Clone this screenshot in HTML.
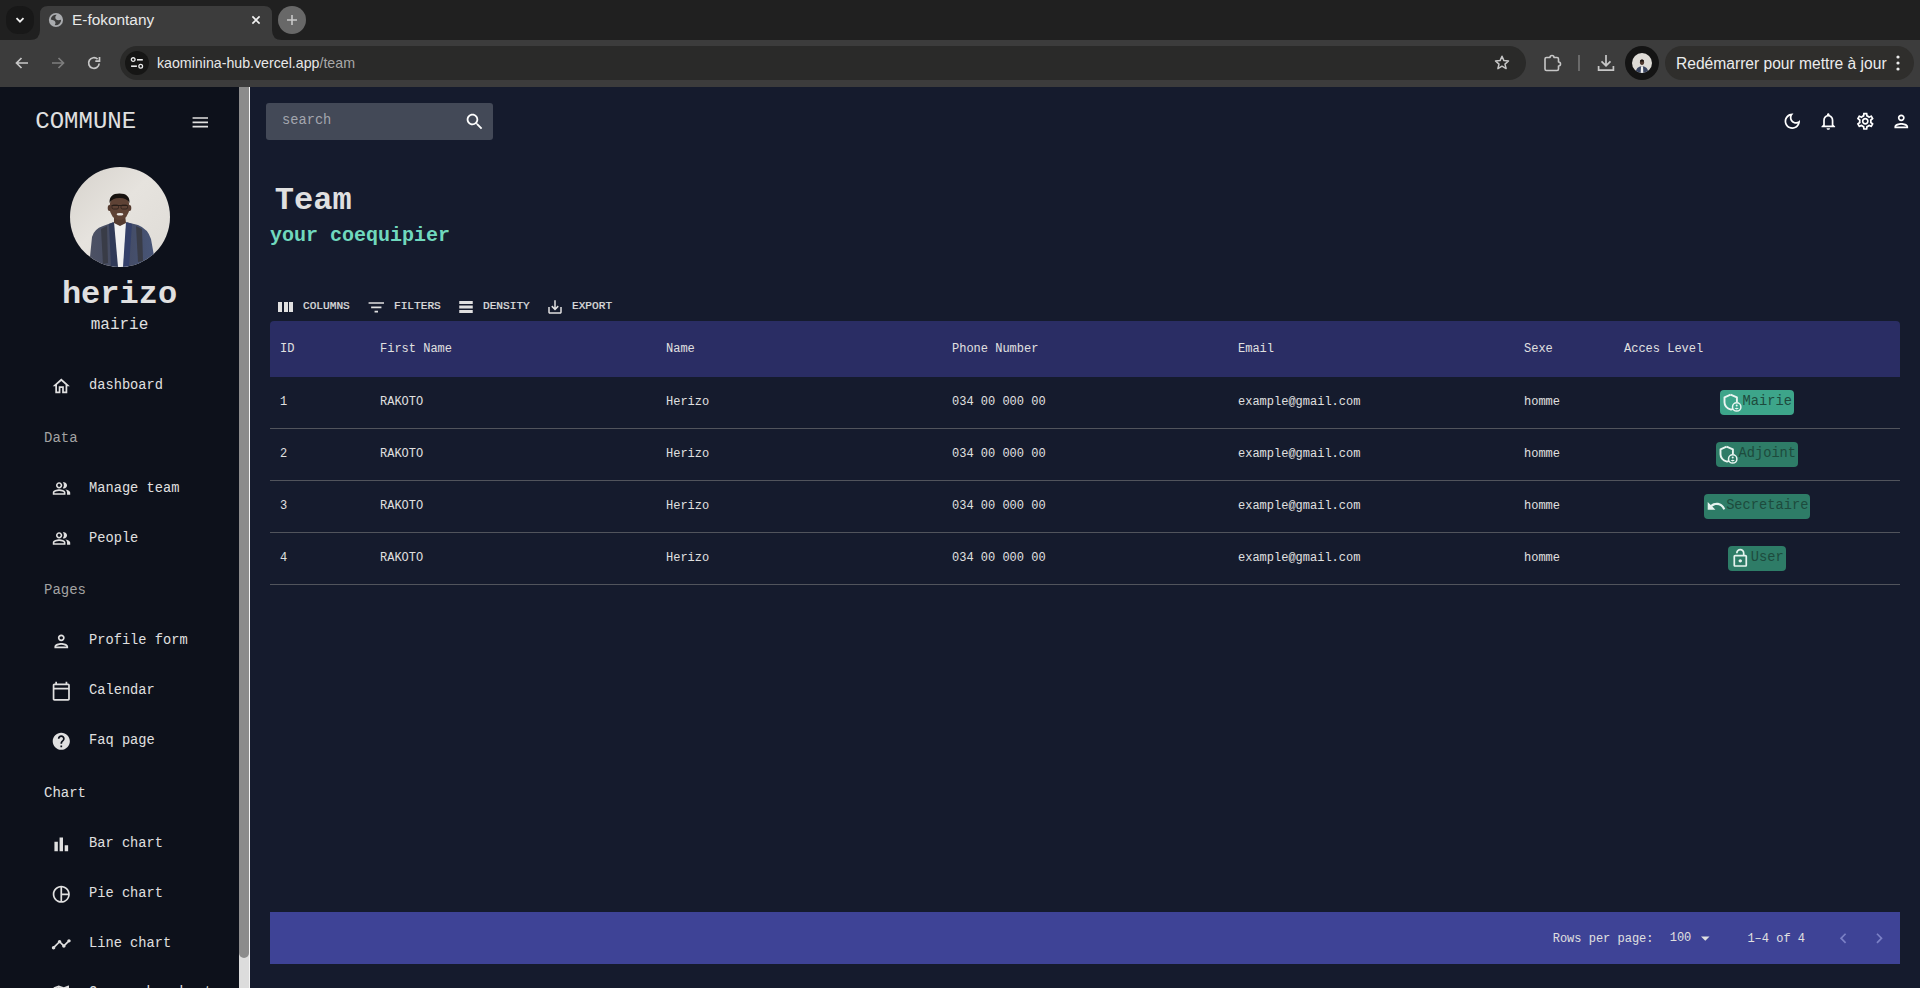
<!DOCTYPE html>
<html><head><meta charset="utf-8">
<style>
*{margin:0;padding:0;box-sizing:border-box}
html,body{width:1920px;height:988px;overflow:hidden;background:#141b2d}
body{position:relative;font-family:"Liberation Mono",monospace;color:#e0e0e0}
.a{position:absolute}
.t{position:absolute;line-height:1;white-space:pre}
.s{font-family:"Liberation Sans",sans-serif}
svg{display:block}
/* chrome */
#tabstrip{left:0;top:0;width:1920px;height:40px;background:#202020}
#toolbar{left:0;top:40px;width:1920px;height:47px;background:#3c3c3c}
#omni{left:120px;top:46px;width:1406px;height:34px;border-radius:17px;background:#2a2a29}
/* page */
#side{left:0;top:87px;width:239px;height:901px;background:#0d111b}
#sbtrack{left:239px;top:87px;width:11px;height:901px;background:#dcdcdc;border-right:1.5px solid #f4f4f4}
#sbthumb{left:239px;top:87px;width:9.7px;height:871px;background:#8b8b8b;border-radius:0 0 5px 5px}
#main{left:250px;top:87px;width:1670px;height:901px;background:#151b2d}
</style></head>
<body>

<div id="tabstrip" class="a"></div>
<div id="toolbar" class="a"></div>
<!-- dropdown btn -->
<div class="a" style="left:6px;top:6px;width:28px;height:28px;border-radius:12px;background:#181818"></div>
<svg class="a" style="left:14px;top:14px" width="12" height="12" viewBox="0 0 12 12"><path d="M2.5 4.2 L6 7.7 L9.5 4.2" fill="none" stroke="#f0f0f0" stroke-width="1.8"/></svg>
<!-- active tab -->
<svg class="a" style="left:30px;top:6px" width="254" height="34" viewBox="0 0 254 34"><path d="M0 34 Q10 34 10 24 L10 8 Q10 0 18 0 L234 0 Q242 0 242 8 L242 24 Q242 34 252 34 Z" fill="#3c3c3c"/></svg>
<svg class="a" style="left:48px;top:12px" width="16" height="16" viewBox="0 0 16 16"><circle cx="7.95" cy="8" r="7.1" fill="#a9abae"/><path d="M2.8 7.4 A5.25 5.25 0 0 1 8.7 2.8 Q7.0 4.2 7.3 6.1 Q7.6 7.7 9.2 8.1 Q11.2 8.4 13.1 7.7 A5.25 5.25 0 0 1 6.7 13.1 Q7.8 11.7 7.4 10.3 Q7.1 8.9 6.0 8.4 Q4.6 7.7 2.8 7.4 Z" fill="#3c3c3c"/></svg>
<div class="t s" style="left:72px;top:12px;font-size:15.4px;color:#e8e8e8">E-fokontany</div>
<svg class="a" style="left:250px;top:14px" width="12" height="12" viewBox="0 0 12 12"><path d="M2.4 2.4 L9.6 9.6 M9.6 2.4 L2.4 9.6" stroke="#f2f2f2" stroke-width="1.6"/></svg>
<div class="a" style="left:278px;top:6px;width:28px;height:28px;border-radius:50%;background:#686868"></div>
<svg class="a" style="left:286px;top:14px" width="12" height="12" viewBox="0 0 12 12"><path d="M6 1 V11 M1 6 H11" stroke="#c9c9c9" stroke-width="1.6"/></svg>
<!-- nav -->
<svg class="a" style="left:13px;top:54px" width="18" height="18" viewBox="0 0 18 18"><path d="M15 9 H3.5 M8.5 4 L3.5 9 L8.5 14" fill="none" stroke="#c7c7c7" stroke-width="1.7"/></svg>
<svg class="a" style="left:49px;top:54px" width="18" height="18" viewBox="0 0 18 18"><path d="M3 9 H14.5 M9.5 4 L14.5 9 L9.5 14" fill="none" stroke="#7d7d7d" stroke-width="1.7"/></svg>
<svg class="a" style="left:85px;top:54px" width="18" height="18" viewBox="0 0 18 18"><path d="M14.2 9.5 A5.3 5.3 0 1 1 12.6 5.2" fill="none" stroke="#c7c7c7" stroke-width="1.7"/><path d="M14.5 3 V7.2 H10.3" fill="none" stroke="#c7c7c7" stroke-width="1.7"/></svg>
<div id="omni" class="a"></div>
<div class="a" style="left:125px;top:51px;width:24px;height:24px;border-radius:50%;background:#161615"></div>
<svg class="a" style="left:129px;top:55px" width="16" height="16" viewBox="0 0 16 16"><circle cx="4.2" cy="4.6" r="1.85" fill="none" stroke="#ececec" stroke-width="1.3"/><path d="M8 4.8 H13.8" stroke="#ececec" stroke-width="1.6"/><circle cx="11.7" cy="11.2" r="1.85" fill="none" stroke="#ececec" stroke-width="1.3"/><path d="M2.1 11.2 H7.9" stroke="#ececec" stroke-width="1.6"/></svg>
<div class="t s" style="left:157px;top:55.5px;font-size:14.2px;color:#e8e8e8">kaominina-hub.vercel.app<span style="color:#a8a8a8">/team</span></div>
<svg class="a" style="left:1494px;top:55px" width="16" height="16" viewBox="0 0 16 16"><path d="M8 1.3 L9.9 5.6 L14.5 6 L11 9.1 L12.1 13.6 L8 11.2 L3.9 13.6 L5 9.1 L1.5 6 L6.1 5.6 Z" fill="none" stroke="#c7c7c7" stroke-width="1.5" stroke-linejoin="round"/></svg>
<svg class="a" style="left:1543px;top:53px" width="20" height="19" viewBox="0 0 20 19"><path d="M3.5 4.5 H7 A2 2 0 0 1 11 4.5 H14 Q15.5 4.5 15.5 6 V9 A2 2 0 0 1 15.5 13 V16 Q15.5 17.5 14 17.5 H3.5 Q2 17.5 2 16 V6 Q2 4.5 3.5 4.5 Z" fill="none" stroke="#c7c7c7" stroke-width="1.6" stroke-linejoin="round"/></svg>
<div class="a" style="left:1578.3px;top:55px;width:1.5px;height:16px;background:#6a6a6a"></div>
<svg class="a" style="left:1596px;top:54px" width="20" height="18" viewBox="0 0 20 18"><path d="M10 1 V11.5 M5.5 7.3 L10 11.7 L14.5 7.3" fill="none" stroke="#c7c7c7" stroke-width="1.7"/><path d="M2.6 12 V16.2 H17.4 V12" fill="none" stroke="#c7c7c7" stroke-width="1.7"/></svg>
<div class="a" style="left:1625px;top:46px;width:34px;height:34px;border-radius:50%;background:#141414"></div>
<svg class="a" style="left:1632px;top:53px" width="20" height="20" viewBox="0 0 20 20"><defs><clipPath id="cav"><circle cx="10" cy="10" r="10"/></clipPath></defs><g clip-path="url(#cav)"><rect width="20" height="20" fill="#dedbd6"/><path d="M3.5 20 Q4 13.5 10 13 Q16 13.5 16.5 20Z" fill="#3a4560"/><path d="M9 13.3 H11 L11.3 20 H8.7Z" fill="#f0f0f0"/><ellipse cx="10" cy="9.3" rx="2.1" ry="2.7" fill="#4f382e"/><path d="M7.9 8.4 Q8 6.4 10 6.4 Q12 6.4 12.1 8.4Z" fill="#1a1412"/></g></svg>
<div class="a" style="left:1665px;top:46px;width:249px;height:34px;border-radius:17px;background:#2f2e2c"></div>
<div class="t s" style="left:1676px;top:55.5px;font-size:15.6px;color:#ececec">Redémarrer pour mettre à jour</div>
<svg class="a" style="left:1892px;top:54px" width="12" height="18" viewBox="0 0 12 18"><circle cx="6" cy="3" r="1.6" fill="#ececec"/><circle cx="6" cy="9" r="1.6" fill="#ececec"/><circle cx="6" cy="15" r="1.6" fill="#ececec"/></svg>
<div id="side" class="a"></div>
<div class="t" style="left:35.3px;top:110px;font-size:24px;color:#e0e0e0">COMMUNE</div>
<svg class="a" style="left:190.1px;top:112.1px" width="20.57" height="20.57" viewBox="0 0 24 24"><path fill="#e0e0e0" d="M3 18h18v-2H3v2zm0-5h18v-2H3v2zm0-7v2h18V6H3z"/></svg>
<svg class="a" style="left:70px;top:167px" width="100" height="100" viewBox="0 0 100 100"><defs><clipPath id="av"><circle cx="50" cy="50" r="50"/></clipPath><linearGradient id="avbg" x1="0" y1="0" x2="1" y2="1"><stop offset="0" stop-color="#d6d2cc"/><stop offset="0.45" stop-color="#e6e3de"/><stop offset="1" stop-color="#dedbd6"/></linearGradient><linearGradient id="jk" x1="0" y1="0" x2="1" y2="0"><stop offset="0" stop-color="#4d5264"/><stop offset="0.5" stop-color="#434a62"/><stop offset="1" stop-color="#485679"/></linearGradient></defs><g clip-path="url(#av)"><rect width="100" height="100" fill="url(#avbg)"/>
<path d="M19 100 L22 70 Q24 62 33 59 L44 55 L56 55 L68 58 Q78 62 81 72 L86 100 Z" fill="url(#jk)"/>
<path d="M31 62 L37 59 L38 96 L33 97 Z" fill="#393c47"/><path d="M66 59 L72 62 L73 94 L68 95 Z" fill="#393c47"/>
<path d="M43 55 L57 55 L58 100 L42 100 Z" fill="#f1f1f1"/>
<path d="M39 57 L44 55 L48 100 L41 100 Z" fill="#303a58"/><path d="M56 55 L62 57 L59 100 L53 100 Z" fill="#34406a"/>
<path d="M44 48 L55 48 L56 56 L50 59 L44 56 Z" fill="#553c31"/>
<ellipse cx="49.5" cy="40" rx="10" ry="13" fill="#5e4235"/>
<ellipse cx="39.5" cy="41" rx="1.8" ry="3" fill="#553b30"/><ellipse cx="59.5" cy="41" rx="1.8" ry="3" fill="#553b30"/>
<path d="M39.5 36 Q39 26.5 49.5 26.5 Q60 26.5 59.5 36 Q57 31 49.5 31 Q42 31 39.5 36Z" fill="#17120f"/>
<path d="M41.5 38.5 H57.5" stroke="#2a1f1a" stroke-width="1.1"/>
<rect x="42" y="38" width="6.5" height="4" rx="1.5" fill="none" stroke="#2a1f1a" stroke-width="0.8"/><rect x="51" y="38" width="6.5" height="4" rx="1.5" fill="none" stroke="#2a1f1a" stroke-width="0.8"/>
<ellipse cx="50" cy="47.3" rx="3.3" ry="1.3" fill="#e9e4e0"/>
</g></svg>
<div class="t" style="left:0;width:239px;text-align:center;top:279.4px;font-size:32px;font-weight:bold;color:#e0e0e0">herizo</div>
<div class="t" style="left:0;width:239px;text-align:center;top:316.8px;font-size:16px;color:#e0e0e0">mairie</div>
<div class="t" style="left:89px;top:378.7px;font-size:13.71px;color:#e0e0e0">dashboard</div>
<svg class="a" style="left:50.7px;top:375.7px" width="20.57" height="20.57" viewBox="0 0 24 24"><path fill="#e0e0e0" d="m12 5.69 5 4.5V18h-2v-6H9v6H7v-7.81zM12 3 2 12h3v8h6v-6h2v6h6v-8h3z"/></svg>
<div class="t" style="left:44px;top:430.9px;font-size:14px;color:#a3a3a3">Data</div>
<div class="t" style="left:89px;top:481.7px;font-size:13.71px;color:#e0e0e0">Manage team</div>
<svg class="a" style="left:51.5px;top:478.9px" width="19" height="19" viewBox="0 0 24 24"><path fill="#e0e0e0" d="M16.67 13.13C18.04 14.06 19 15.32 19 17v3h4v-3c0-2.18-3.57-3.47-6.33-3.87M15 12c2.21 0 4-1.79 4-4s-1.79-4-4-4c-.47 0-.91.1-1.33.24C14.5 5.27 15 6.58 15 8s-.5 2.73-1.33 3.76c.42.14.86.24 1.33.24m-6 0c2.21 0 4-1.79 4-4s-1.79-4-4-4-4 1.79-4 4 1.79 4 4 4m0-6c1.1 0 2 .9 2 2s-.9 2-2 2-2-.9-2-2 .9-2 2-2m0 7c-2.67 0-8 1.34-8 4v3h16v-3c0-2.66-5.33-4-8-4m6 5H3v-.99C3.2 16.29 6.3 15 9 15s5.8 1.29 6 2z"/></svg>
<div class="t" style="left:89px;top:531.7px;font-size:13.71px;color:#e0e0e0">People</div>
<svg class="a" style="left:51.5px;top:528.9px" width="19" height="19" viewBox="0 0 24 24"><path fill="#e0e0e0" d="M16.67 13.13C18.04 14.06 19 15.32 19 17v3h4v-3c0-2.18-3.57-3.47-6.33-3.87M15 12c2.21 0 4-1.79 4-4s-1.79-4-4-4c-.47 0-.91.1-1.33.24C14.5 5.27 15 6.58 15 8s-.5 2.73-1.33 3.76c.42.14.86.24 1.33.24m-6 0c2.21 0 4-1.79 4-4s-1.79-4-4-4-4 1.79-4 4 1.79 4 4 4m0-6c1.1 0 2 .9 2 2s-.9 2-2 2-2-.9-2-2 .9-2 2-2m0 7c-2.67 0-8 1.34-8 4v3h16v-3c0-2.66-5.33-4-8-4m6 5H3v-.99C3.2 16.29 6.3 15 9 15s5.8 1.29 6 2z"/></svg>
<div class="t" style="left:44px;top:582.9px;font-size:14px;color:#a3a3a3">Pages</div>
<div class="t" style="left:89px;top:633.7px;font-size:13.71px;color:#e0e0e0">Profile form</div>
<svg class="a" style="left:50.7px;top:630.7px" width="20.57" height="20.57" viewBox="0 0 24 24"><path fill="#e0e0e0" d="M12 6c1.1 0 2 .9 2 2s-.9 2-2 2-2-.9-2-2 .9-2 2-2m0 10c2.7 0 5.8 1.29 6 2H6c.23-.72 3.31-2 6-2m0-12C9.79 4 8 5.79 8 8s1.79 4 4 4 4-1.79 4-4-1.79-4-4-4m0 10c-2.67 0-8 1.34-8 4v2h16v-2c0-2.66-5.33-4-8-4"/></svg>
<div class="t" style="left:89px;top:683.7px;font-size:13.71px;color:#e0e0e0">Calendar</div>
<svg class="a" style="left:50.7px;top:680.7px" width="20.57" height="20.57" viewBox="0 0 24 24"><path fill="#e0e0e0" d="M20 3h-1V1h-2v2H7V1H5v2H4c-1.1 0-2 .9-2 2v16c0 1.1.9 2 2 2h16c1.1 0 2-.9 2-2V5c0-1.1-.9-2-2-2zm0 18H4V10h16v11zm0-13H4V5h16v3z"/></svg>
<div class="t" style="left:89px;top:733.7px;font-size:13.71px;color:#e0e0e0">Faq page</div>
<svg class="a" style="left:50.7px;top:730.7px" width="20.57" height="20.57" viewBox="0 0 24 24"><path fill="#e0e0e0" d="M12 2C6.48 2 2 6.48 2 12s4.48 10 10 10 10-4.48 10-10S17.52 2 12 2zm1 17h-2v-2h2v2zm2.07-7.75-.9.92C13.45 12.9 13 13.5 13 15h-2v-.5c0-1.1.45-2.1 1.17-2.83l1.24-1.26c.37-.36.59-.86.59-1.41 0-1.1-.9-2-2-2s-2 .9-2 2H8c0-2.21 1.79-4 4-4s4 1.79 4 4c0 .88-.36 1.68-.93 2.25z"/></svg>
<div class="t" style="left:44px;top:785.9px;font-size:14px;color:#e0e0e0">Chart</div>
<div class="t" style="left:89px;top:836.7px;font-size:13.71px;color:#e0e0e0">Bar chart</div>
<svg class="a" style="left:50.7px;top:833.7px" width="20.57" height="20.57" viewBox="0 0 24 24"><path fill="#e0e0e0" d="M4 9h4v11H4zm12 4h4v7h-4zm-6-9h4v16h-4z"/></svg>
<div class="t" style="left:89px;top:886.7px;font-size:13.71px;color:#e0e0e0">Pie chart</div>
<svg class="a" style="left:50.7px;top:883.7px" width="20.57" height="20.57" viewBox="0 0 24 24"><path fill="#e0e0e0" d="M12 2C6.49 2 2 6.49 2 12s4.49 10 10 10 10-4.49 10-10S17.51 2 12 2zm7.93 9H13V4.07c3.61.45 6.48 3.32 6.93 6.93zM4 12c0-4.07 3.06-7.44 7-7.93v15.87c-3.94-.5-7-3.87-7-7.94zm9 7.93V13h6.93c-.45 3.61-3.32 6.48-6.93 6.93z"/></svg>
<div class="t" style="left:89px;top:936.7px;font-size:13.71px;color:#e0e0e0">Line chart</div>
<svg class="a" style="left:50.7px;top:933.7px" width="20.57" height="20.57" viewBox="0 0 24 24"><path fill="#e0e0e0" d="M23 8c0 1.1-.9 2-2 2-.18 0-.35-.02-.51-.07l-3.56 3.55c.05.16.07.34.07.52 0 1.1-.9 2-2 2s-2-.9-2-2c0-.18.02-.36.07-.52l-2.55-2.55c-.16.05-.34.07-.52.07s-.36-.02-.52-.07l-4.55 4.56c.05.16.07.33.07.51 0 1.1-.9 2-2 2s-2-.9-2-2 .9-2 2-2c.18 0 .35.02.51.07l4.56-4.55C8.02 9.36 8 9.18 8 9c0-1.1.9-2 2-2s2 .9 2 2c0 .18-.02.36-.07.52l2.55 2.55c.16-.05.34-.07.52-.07s.36.02.52.07l3.55-3.56C19.02 8.35 19 8.18 19 8c0-1.1.9-2 2-2s2 .9 2 2z"/></svg>
<div class="t" style="left:89px;top:986.3px;font-size:13.71px;color:#e0e0e0">Geography chart</div>
<svg class="a" style="left:50.7px;top:983.3px" width="20.57" height="20.57" viewBox="0 0 24 24"><path fill="#e0e0e0" d="m20.5 3-.16.03L15 5.1 9 3 3.36 4.9c-.21.07-.36.25-.36.48V20.5c0 .28.22.5.5.5l.16-.03L9 18.9l6 2.1 5.64-1.9c.21-.07.36-.25.36-.48V3.5c0-.28-.22-.5-.5-.5M10 5.47l4 1.4v11.66l-4-1.4zm-5 .99 3-1.01v11.7l-3 1.16zm14 11.08-3 1.01V6.86l3-1.16z"/></svg>
<div id="sbtrack" class="a"></div>
<div id="sbthumb" class="a"></div>
<div id="main" class="a"></div>
<div class="a" style="left:266px;top:103px;width:227px;height:37px;border-radius:3px;background:#434957"></div>
<div class="t" style="left:282px;top:113.50px;font-size:13.71px;color:#a3a6ae;">search</div>
<svg class="a" style="left:464.2px;top:111px" width="21.4" height="21.4" viewBox="0 0 24 24"><path fill="#ffffff" d="M15.5 14h-.79l-.28-.27C15.41 12.59 16 11.11 16 9.5 16 5.91 13.09 3 9.5 3S3 5.91 3 9.5 5.91 16 9.5 16c1.61 0 3.09-.59 4.23-1.57l.27.28v.79l5 4.99L20.49 19l-4.99-5zm-6 0C7.01 14 5 11.99 5 9.5S7.01 5 9.5 5 14 7.01 14 9.5 11.99 14 9.5 14z"/></svg>
<svg class="a" style="left:1781.6px;top:110.7px" width="20.57" height="20.57" viewBox="0 0 24 24"><path fill="#ffffff" d="M9.37 5.51c-.18.64-.27 1.31-.27 1.99 0 4.08 3.32 7.4 7.4 7.4.68 0 1.35-.09 1.99-.27C17.45 17.19 14.93 19 12 19c-3.86 0-7-3.14-7-7 0-2.93 1.81-5.45 4.37-6.49zM12 3c-4.97 0-9 4.03-9 9s4.03 9 9 9 9-4.03 9-9c0-.46-.04-.92-.1-1.36-.98 1.37-2.58 2.26-4.4 2.26-2.98 0-5.4-2.42-5.4-5.4 0-1.81.89-3.42 2.26-4.4-.44-.06-.9-.1-1.36-.1z"/></svg>
<svg class="a" style="left:1818.17px;top:110.7px" width="20.57" height="20.57" viewBox="0 0 24 24"><path fill="#ffffff" d="M12 22c1.1 0 2-.9 2-2h-4c0 1.1.89 2 2 2zm6-6v-5c0-3.07-1.64-5.64-4.5-6.32V4c0-.83-.67-1.5-1.5-1.5s-1.5.67-1.5 1.5v.68C7.63 5.36 6 7.92 6 11v5l-2 2v1h16v-1l-2-2zm-2 1H8v-6c0-2.48 1.51-4.5 4-4.5s4 2.02 4 4.5v6z"/></svg>
<svg class="a" style="left:1854.74px;top:110.7px" width="20.57" height="20.57" viewBox="0 0 24 24"><path fill="#ffffff" d="M19.43 12.98c.04-.32.07-.64.07-.98 0-.34-.03-.66-.07-.98l2.11-1.65c.19-.15.24-.42.12-.64l-2-3.46c-.09-.16-.26-.25-.44-.25-.06 0-.12.01-.17.03l-2.49 1c-.52-.4-1.08-.73-1.69-.98l-.38-2.65C14.46 2.18 14.25 2 14 2h-4c-.25 0-.46.18-.49.42l-.38 2.65c-.61.25-1.17.59-1.69.98l-2.49-1c-.06-.02-.12-.03-.18-.03-.17 0-.34.09-.43.25l-2 3.46c-.13.22-.07.49.12.64l2.11 1.65c-.04.32-.07.65-.07.98 0 .33.03.66.07.98l-2.11 1.65c-.19.15-.24.42-.12.64l2 3.46c.09.16.26.25.44.25.06 0 .12-.01.17-.03l2.49-1c.52.4 1.08.73 1.69.98l.38 2.65c.03.24.24.42.49.42h4c.25 0 .46-.18.49-.42l.38-2.65c.61-.25 1.17-.59 1.69-.98l2.49 1c.06.02.12.03.18.03.17 0 .34-.09.43-.25l2-3.46c.12-.22.07-.49-.12-.64l-2.11-1.65zm-1.98-1.71c.04.31.05.52.05.73 0 .21-.02.43-.05.73l-.14 1.13.89.7 1.08.84-.7 1.21-1.27-.51-1.04-.42-.9.68c-.43.32-.84.56-1.25.73l-1.06.43-.16 1.13-.2 1.35h-1.4l-.19-1.35-.16-1.130-1.06-.43c-.43-.18-.83-.41-1.23-.71l-.91-.7-1.06.43-1.27.51-.7-1.21 1.08-.84.89-.7-.14-1.13c-.03-.31-.05-.54-.05-.74s.02-.43.05-.73l.14-1.13-.89-.7-1.08-.84.7-1.21 1.27.51 1.04.42.9-.68c.43-.32.84-.56 1.25-.73l1.06-.43.16-1.13.2-1.35h1.39l.19 1.35.16 1.13 1.06.43c.43.18.83.41 1.23.71l.91.7 1.06-.43 1.27-.51.7 1.21-1.07.85-.89.7.14 1.13zM12 8c-2.21 0-4 1.79-4 4s1.79 4 4 4 4-1.79 4-4-1.79-4-4-4zm0 6c-1.1 0-2-.9-2-2s.9-2 2-2 2 .9 2 2-.9 2-2 2z"/></svg>
<svg class="a" style="left:1891.31px;top:110.7px" width="20.57" height="20.57" viewBox="0 0 24 24"><path fill="#ffffff" d="M12 6c1.1 0 2 .9 2 2s-.9 2-2 2-2-.9-2-2 .9-2 2-2m0 10c2.7 0 5.8 1.29 6 2H6c.23-.72 3.31-2 6-2m0-12C9.79 4 8 5.79 8 8s1.79 4 4 4 4-1.79 4-4-1.79-4-4-4m0 10c-2.67 0-8 1.34-8 4v2h16v-2c0-2.66-5.33-4-8-4"/></svg>
<div class="t" style="left:274.8px;top:184.8px;font-size:32px;color:#e0e0e0;font-weight:bold">Team</div>
<div class="t" style="left:270px;top:226.08px;font-size:20px;color:#70d8bd;font-weight:bold">your coequipier</div>
<div class="a" style="left:278px;top:301.7px;width:4px;height:10.4px;background:#e0e0e0"></div><div class="a" style="left:283.6px;top:301.7px;width:4px;height:10.4px;background:#e0e0e0"></div><div class="a" style="left:289px;top:301.7px;width:4px;height:10.4px;background:#e0e0e0"></div>
<div class="t" style="left:303px;top:300.57px;font-size:11.14px;color:#e0e0e0;-webkit-text-stroke:0.2px #e0e0e0">COLUMNS</div>
<svg class="a" style="left:366px;top:297.4px" width="20.57" height="20.57" viewBox="0 0 24 24"><path fill="#e0e0e0" d="M10 18h4v-2h-4v2zM3 6v2h18V6H3zm3 7h12v-2H6v2z"/></svg>
<div class="t" style="left:394px;top:300.57px;font-size:11.14px;color:#e0e0e0;-webkit-text-stroke:0.2px #e0e0e0">FILTERS</div>
<svg class="a" style="left:456.75px;top:298.1px" width="18" height="18" viewBox="0 0 24 24"><path fill="#e0e0e0" d="M21 8H3V4h18v4zm0 2H3v4h18v-4zm0 6H3v4h18v-4z"/></svg>
<div class="t" style="left:483px;top:300.57px;font-size:11.14px;color:#e0e0e0;-webkit-text-stroke:0.2px #e0e0e0">DENSITY</div>
<svg class="a" style="left:545.75px;top:297.55px" width="18" height="18" viewBox="0 0 24 24"><path fill="#e0e0e0" d="M19 12v7H5v-7H3v7c0 1.1.9 2 2 2h14c1.1 0 2-.9 2-2v-7h-2zm-6 .67 2.59-2.58L17 11.5l-5 5-5-5 1.41-1.41L11 12.67V3h2z"/></svg>
<div class="t" style="left:572px;top:300.57px;font-size:11.14px;color:#e0e0e0;-webkit-text-stroke:0.2px #e0e0e0">EXPORT</div>
<div class="a" style="left:270px;top:321px;width:1630px;height:56px;background:#2a2d64;border-radius:4px 4px 0 0"></div>
<div class="t" style="left:280.00px;top:343.11px;font-size:12px;color:#e0e0e0;">ID</div>
<div class="t" style="left:380.00px;top:343.11px;font-size:12px;color:#e0e0e0;">First Name</div>
<div class="t" style="left:666.00px;top:343.11px;font-size:12px;color:#e0e0e0;">Name</div>
<div class="t" style="left:952.00px;top:343.11px;font-size:12px;color:#e0e0e0;">Phone Number</div>
<div class="t" style="left:1238.00px;top:343.11px;font-size:12px;color:#e0e0e0;">Email</div>
<div class="t" style="left:1524.00px;top:343.11px;font-size:12px;color:#e0e0e0;">Sexe</div>
<div class="t" style="left:1624.00px;top:343.11px;font-size:12px;color:#e0e0e0;">Acces Level</div>
<div class="t" style="left:280.00px;top:396.01px;font-size:12px;color:#e0e0e0;">1</div>
<div class="t" style="left:380.00px;top:396.01px;font-size:12px;color:#e0e0e0;">RAKOTO</div>
<div class="t" style="left:666.00px;top:396.01px;font-size:12px;color:#e0e0e0;">Herizo</div>
<div class="t" style="left:952.00px;top:396.01px;font-size:12px;color:#e0e0e0;">034 00 000 00</div>
<div class="t" style="left:1238.00px;top:396.01px;font-size:12px;color:#e0e0e0;">example@gmail.com</div>
<div class="t" style="left:1524.00px;top:396.01px;font-size:12px;color:#e0e0e0;">homme</div>
<div class="a" style="left:270px;top:428px;width:1630px;height:1px;background:#51545c"></div>
<div class="a" style="left:1720.04px;top:390px;width:73.93px;height:25px;border-radius:4px;background:#3da58a"></div>
<svg class="a" style="left:1720.04px;top:390px;overflow:visible" width="26" height="25" viewBox="0 0 26 25"><path d="M10.6 4.6 L4.5 7.3 V12.2 Q4.5 17.6 11 19.6 Q13.5 19 14.6 17.6" fill="none" stroke="#e9f5f1" stroke-width="1.9" stroke-linejoin="round"/><path d="M10.6 4.6 L16.9 7.3 V12.1" fill="none" stroke="#e9f5f1" stroke-width="1.9" stroke-linejoin="round"/><circle cx="16.7" cy="16.9" r="4.2" fill="#3da58a" stroke="#e9f5f1" stroke-width="1.5"/><circle cx="16.7" cy="15.6" r="1.0" fill="#e9f5f1"/><path d="M14.6 18.6 Q16.7 16.9 18.8 18.6 Q16.7 20.2 14.6 18.6Z" fill="#e9f5f1"/></svg>
<div class="t" style="left:1742.61px;top:394.70px;font-size:13.71px;color:#1d4b3d;">Mairie</div>
<div class="t" style="left:280.00px;top:448.01px;font-size:12px;color:#e0e0e0;">2</div>
<div class="t" style="left:380.00px;top:448.01px;font-size:12px;color:#e0e0e0;">RAKOTO</div>
<div class="t" style="left:666.00px;top:448.01px;font-size:12px;color:#e0e0e0;">Herizo</div>
<div class="t" style="left:952.00px;top:448.01px;font-size:12px;color:#e0e0e0;">034 00 000 00</div>
<div class="t" style="left:1238.00px;top:448.01px;font-size:12px;color:#e0e0e0;">example@gmail.com</div>
<div class="t" style="left:1524.00px;top:448.01px;font-size:12px;color:#e0e0e0;">homme</div>
<div class="a" style="left:270px;top:480px;width:1630px;height:1px;background:#51545c"></div>
<div class="a" style="left:1715.92px;top:442px;width:82.15px;height:25px;border-radius:4px;background:#2e7c67"></div>
<svg class="a" style="left:1715.92px;top:442px;overflow:visible" width="26" height="25" viewBox="0 0 26 25"><path d="M10.6 4.6 L4.5 7.3 V12.2 Q4.5 17.6 11 19.6 Q13.5 19 14.6 17.6" fill="none" stroke="#e9f5f1" stroke-width="1.9" stroke-linejoin="round"/><path d="M10.6 4.6 L16.9 7.3 V12.1" fill="none" stroke="#e9f5f1" stroke-width="1.9" stroke-linejoin="round"/><circle cx="16.7" cy="16.9" r="4.2" fill="#2e7c67" stroke="#e9f5f1" stroke-width="1.5"/><circle cx="16.7" cy="15.6" r="1.0" fill="#e9f5f1"/><path d="M14.6 18.6 Q16.7 16.9 18.8 18.6 Q16.7 20.2 14.6 18.6Z" fill="#e9f5f1"/></svg>
<div class="t" style="left:1738.49px;top:446.70px;font-size:13.71px;color:#1d4b3d;">Adjoint</div>
<div class="t" style="left:280.00px;top:500.01px;font-size:12px;color:#e0e0e0;">3</div>
<div class="t" style="left:380.00px;top:500.01px;font-size:12px;color:#e0e0e0;">RAKOTO</div>
<div class="t" style="left:666.00px;top:500.01px;font-size:12px;color:#e0e0e0;">Herizo</div>
<div class="t" style="left:952.00px;top:500.01px;font-size:12px;color:#e0e0e0;">034 00 000 00</div>
<div class="t" style="left:1238.00px;top:500.01px;font-size:12px;color:#e0e0e0;">example@gmail.com</div>
<div class="t" style="left:1524.00px;top:500.01px;font-size:12px;color:#e0e0e0;">homme</div>
<div class="a" style="left:270px;top:532px;width:1630px;height:1px;background:#51545c"></div>
<div class="a" style="left:1703.59px;top:494px;width:106.83px;height:25px;border-radius:4px;background:#2e7c67"></div>
<svg class="a" style="left:1705.59px;top:496.00px;overflow:visible" width="20.57" height="20.57" viewBox="0 0 24 24"><path fill="#e6f3ef" d="M12.5 8c-2.65 0-5.05.99-6.9 2.6L2 7v9h9l-3.62-3.62c1.39-1.16 3.16-1.88 5.12-1.88 3.54 0 6.55 2.31 7.6 5.5l2.37-.78C21.08 11.03 17.15 8 12.5 8z"/></svg>
<div class="t" style="left:1726.15px;top:498.70px;font-size:13.71px;color:#1d4b3d;">Secretaire</div>
<div class="t" style="left:280.00px;top:552.01px;font-size:12px;color:#e0e0e0;">4</div>
<div class="t" style="left:380.00px;top:552.01px;font-size:12px;color:#e0e0e0;">RAKOTO</div>
<div class="t" style="left:666.00px;top:552.01px;font-size:12px;color:#e0e0e0;">Herizo</div>
<div class="t" style="left:952.00px;top:552.01px;font-size:12px;color:#e0e0e0;">034 00 000 00</div>
<div class="t" style="left:1238.00px;top:552.01px;font-size:12px;color:#e0e0e0;">example@gmail.com</div>
<div class="t" style="left:1524.00px;top:552.01px;font-size:12px;color:#e0e0e0;">homme</div>
<div class="a" style="left:270px;top:584px;width:1630px;height:1px;background:#51545c"></div>
<div class="a" style="left:1728.26px;top:546px;width:57.47px;height:25px;border-radius:4px;background:#2e7c67"></div>
<svg class="a" style="left:1730.26px;top:548.00px;overflow:visible" width="20.57" height="20.57" viewBox="0 0 24 24"><path fill="#e6f3ef" d="M12 17c1.1 0 2-.9 2-2s-.9-2-2-2-2 .9-2 2 .9 2 2 2zm6-9h-1V6c0-2.76-2.24-5-5-5S7 3.24 7 6h2c0-1.660 1.34-3 3-3s3 1.34 3 3v2H6c-1.1 0-2 .9-2 2v10c0 1.1.9 2 2 2h12c1.1 0 2-.9 2-2V10c0-1.1-.9-2-2-2zm0 12H6V10h12v10z"/></svg>
<div class="t" style="left:1750.83px;top:550.70px;font-size:13.71px;color:#1d4b3d;">User</div>
<div class="a" style="left:270px;top:912px;width:1630px;height:52px;background:#3e4396"></div>
<div class="t" style="left:1552.70px;top:932.81px;font-size:12px;color:#e0e0e0;">Rows per page:</div>
<div class="t" style="left:1669.70px;top:932.31px;font-size:12px;color:#e0e0e0;">100</div>
<svg class="a" style="left:1695px;top:928px" width="20.57" height="20.57" viewBox="0 0 24 24"><path fill="#e0e0e0" d="M7 10l5 5 5-5z"/></svg>
<div class="t" style="left:1747.40px;top:932.81px;font-size:12px;color:#e0e0e0;">1–4 of 4</div>
<svg class="a" style="left:1833px;top:928.1px" width="20.57" height="20.57" viewBox="0 0 24 24"><path fill="#7b80c6" d="M15.41 7.41 14 6l-6 6 6 6 1.41-1.41L10.83 12z"/></svg>
<svg class="a" style="left:1869px;top:928.1px" width="20.57" height="20.57" viewBox="0 0 24 24"><path fill="#7b80c6" d="M10 6 8.59 7.41 13.17 12l-4.58 4.59L10 18l6-6z"/></svg>
</body></html>
